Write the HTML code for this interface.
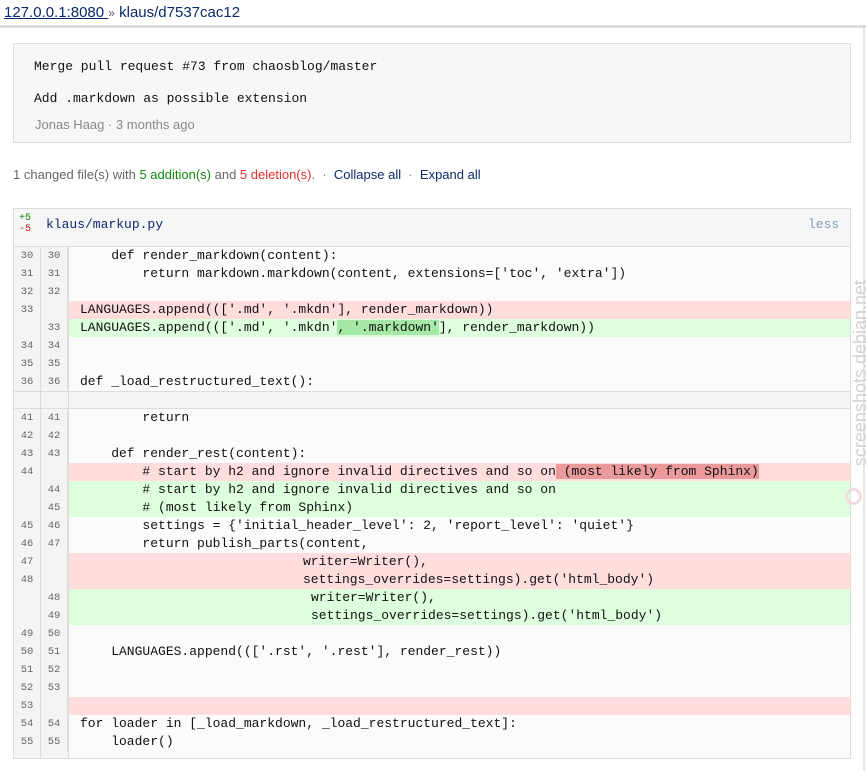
<!DOCTYPE html>
<html><head><meta charset="utf-8"><style>
*{margin:0;padding:0;box-sizing:border-box}
body{width:866px;height:771px;background:#fff;position:relative;overflow:hidden;font-family:"Liberation Sans",Helvetica,Arial,sans-serif}
.a{position:absolute}
.mono{font-family:"Liberation Mono","Courier New",monospace}
.row{position:absolute;left:14px;width:836px;height:18px;font-family:"Liberation Mono",monospace;font-size:13px;line-height:18px;white-space:pre;color:#111}
.row .n1,.row .n2{position:absolute;top:0;width:27px;height:18px;text-align:center;font-size:10.5px;color:#666;background:#f4f4f4;border-right:1px solid #ddd}
.row .n1{left:0}.row .n2{left:27px}
.row .c{position:absolute;left:55px;right:0;top:0;height:18px;padding-left:11px;background:#fbfbfb}
.del .c{background:#ffdddd}.add .c{background:#ddffdd}
.hd{background:#ea9a9a}.ha{background:#a6e8a6}
</style></head><body>
<div class="a" style="left:4px;top:4px;font-size:15px;color:#0a2a6a;line-height:18px"><span style="text-decoration:underline">127.0.0.1:8080 </span><span style="font-size:12px;color:#555">»</span> klaus/d7537cac12</div>
<div class="a" style="left:0;top:25px;width:866px;height:3px;background:#ddd"></div>
<div class="a" style="left:863px;top:28px;width:2px;height:743px;background:#e6e6e6"></div>
<div class="a" style="left:13px;top:43px;width:838px;height:100px;background:#f7f7f7;border:1px solid #ddd"></div>
<div class="a mono" style="left:34px;top:59px;font-size:13px;color:#111;line-height:16px">Merge pull request #73 from chaosblog/master</div>
<div class="a mono" style="left:34px;top:91px;font-size:13px;color:#111;line-height:16px">Add .markdown as possible extension</div>
<div class="a" style="left:35px;top:117px;font-size:13px;color:#888;line-height:16px">Jonas Haag · 3 months ago</div>
<div class="a" style="left:13px;top:167px;font-size:13px;color:#666;line-height:16px">1 changed file(s) with <span style="color:#118811">5 addition(s)</span> and <span style="color:#e03030">5 deletion(s)</span>. &nbsp;<span style="color:#888">·</span>&nbsp; <span style="color:#0a2a6a">Collapse all</span> &nbsp;<span style="color:#888">·</span>&nbsp; <span style="color:#0a2a6a">Expand all</span></div>
<div class="a" style="left:13px;top:208px;width:838px;height:551px;border:1px solid #ddd;background:#fbfbfb"></div>
<div class="a" style="left:14px;top:209px;width:836px;height:38px;background:#f6f6f6;border-bottom:1px solid #ddd"></div>
<div class="a mono" style="left:19px;top:213px;font-size:10px;line-height:11px;color:#118811">+5</div>
<div class="a mono" style="left:19px;top:224px;font-size:10px;line-height:11px;color:#d02020">-5</div>
<div class="a mono" style="left:46px;top:217px;font-size:13px;color:#0a2a6a;line-height:16px">klaus/markup.py</div>
<div class="a mono" style="left:808px;top:217px;font-size:13px;color:#8899bb;line-height:16px">less</div>
<div class="a" style="left:14px;top:391px;width:836px;height:18px;background:#f4f4f4;border-top:1px solid #ddd;border-bottom:1px solid #ddd"></div>

<div class="row" style="top:247px"><div class="n1">30</div><div class="n2">30</div><div class="c">    def render_markdown(content):</div></div>
<div class="row" style="top:265px"><div class="n1">31</div><div class="n2">31</div><div class="c">        return markdown.markdown(content, extensions=['toc', 'extra'])</div></div>
<div class="row" style="top:283px"><div class="n1">32</div><div class="n2">32</div><div class="c"></div></div>
<div class="row del" style="top:301px"><div class="n1">33</div><div class="n2"></div><div class="c">LANGUAGES.append((['.md', '.mkdn'], render_markdown))</div></div>
<div class="row add" style="top:319px"><div class="n1"></div><div class="n2">33</div><div class="c">LANGUAGES.append((['.md', '.mkdn'<span class="ha">, '.markdown'</span>], render_markdown))</div></div>
<div class="row" style="top:337px"><div class="n1">34</div><div class="n2">34</div><div class="c"></div></div>
<div class="row" style="top:355px"><div class="n1">35</div><div class="n2">35</div><div class="c"></div></div>
<div class="row" style="top:373px"><div class="n1">36</div><div class="n2">36</div><div class="c">def _load_restructured_text():</div></div>

<div class="row" style="top:409px"><div class="n1">41</div><div class="n2">41</div><div class="c">        return</div></div>
<div class="row" style="top:427px"><div class="n1">42</div><div class="n2">42</div><div class="c"></div></div>
<div class="row" style="top:445px"><div class="n1">43</div><div class="n2">43</div><div class="c">    def render_rest(content):</div></div>
<div class="row del" style="top:463px"><div class="n1">44</div><div class="n2"></div><div class="c">        # start by h2 and ignore invalid directives and so on<span class="hd"> (most likely from Sphinx)</span></div></div>
<div class="row add" style="top:481px"><div class="n1"></div><div class="n2">44</div><div class="c">        # start by h2 and ignore invalid directives and so on</div></div>
<div class="row add" style="top:499px"><div class="n1"></div><div class="n2">45</div><div class="c">        # (most likely from Sphinx)</div></div>
<div class="row" style="top:517px"><div class="n1">45</div><div class="n2">46</div><div class="c">        settings = {'initial_header_level': 2, 'report_level': 'quiet'}</div></div>
<div class="row" style="top:535px"><div class="n1">46</div><div class="n2">47</div><div class="c">        return publish_parts(content,</div></div>
<div class="row del" style="top:553px"><div class="n1">47</div><div class="n2"></div><div class="c" style="padding-left:234px">writer=Writer(),</div></div>
<div class="row del" style="top:571px"><div class="n1">48</div><div class="n2"></div><div class="c" style="padding-left:234px">settings_overrides=settings).get('html_body')</div></div>
<div class="row add" style="top:589px"><div class="n1"></div><div class="n2">48</div><div class="c" style="padding-left:242px">writer=Writer(),</div></div>
<div class="row add" style="top:607px"><div class="n1"></div><div class="n2">49</div><div class="c" style="padding-left:242px">settings_overrides=settings).get('html_body')</div></div>
<div class="row" style="top:625px"><div class="n1">49</div><div class="n2">50</div><div class="c"></div></div>
<div class="row" style="top:643px"><div class="n1">50</div><div class="n2">51</div><div class="c">    LANGUAGES.append((['.rst', '.rest'], render_rest))</div></div>
<div class="row" style="top:661px"><div class="n1">51</div><div class="n2">52</div><div class="c"></div></div>
<div class="row" style="top:679px"><div class="n1">52</div><div class="n2">53</div><div class="c"></div></div>
<div class="row del" style="top:697px"><div class="n1">53</div><div class="n2"></div><div class="c"></div></div>
<div class="row" style="top:715px"><div class="n1">54</div><div class="n2">54</div><div class="c">for loader in [_load_markdown, _load_restructured_text]:</div></div>
<div class="row" style="top:733px"><div class="n1">55</div><div class="n2">55</div><div class="c">    loader()</div></div>
<div class="a" style="left:14px;top:751px;width:55px;height:7px;background:#f4f4f4"></div>
<div class="a" style="left:40px;top:247px;width:1px;height:511px;background:#ddd"></div>
<div class="a" style="left:68px;top:247px;width:1px;height:511px;background:#ddd"></div>

<div class="a" style="left:860px;top:373px;width:0;height:0"><div style="position:absolute;left:-105px;top:-10px;width:210px;transform:rotate(-90deg);font-size:18px;color:#d2d2d2;white-space:nowrap;text-align:center;line-height:20px">screenshots.debian.net</div></div>
<div class="a" style="left:845px;top:488px;width:17px;height:17px;border:3px solid #f2dcdc;border-radius:50%"></div>
</body></html>
